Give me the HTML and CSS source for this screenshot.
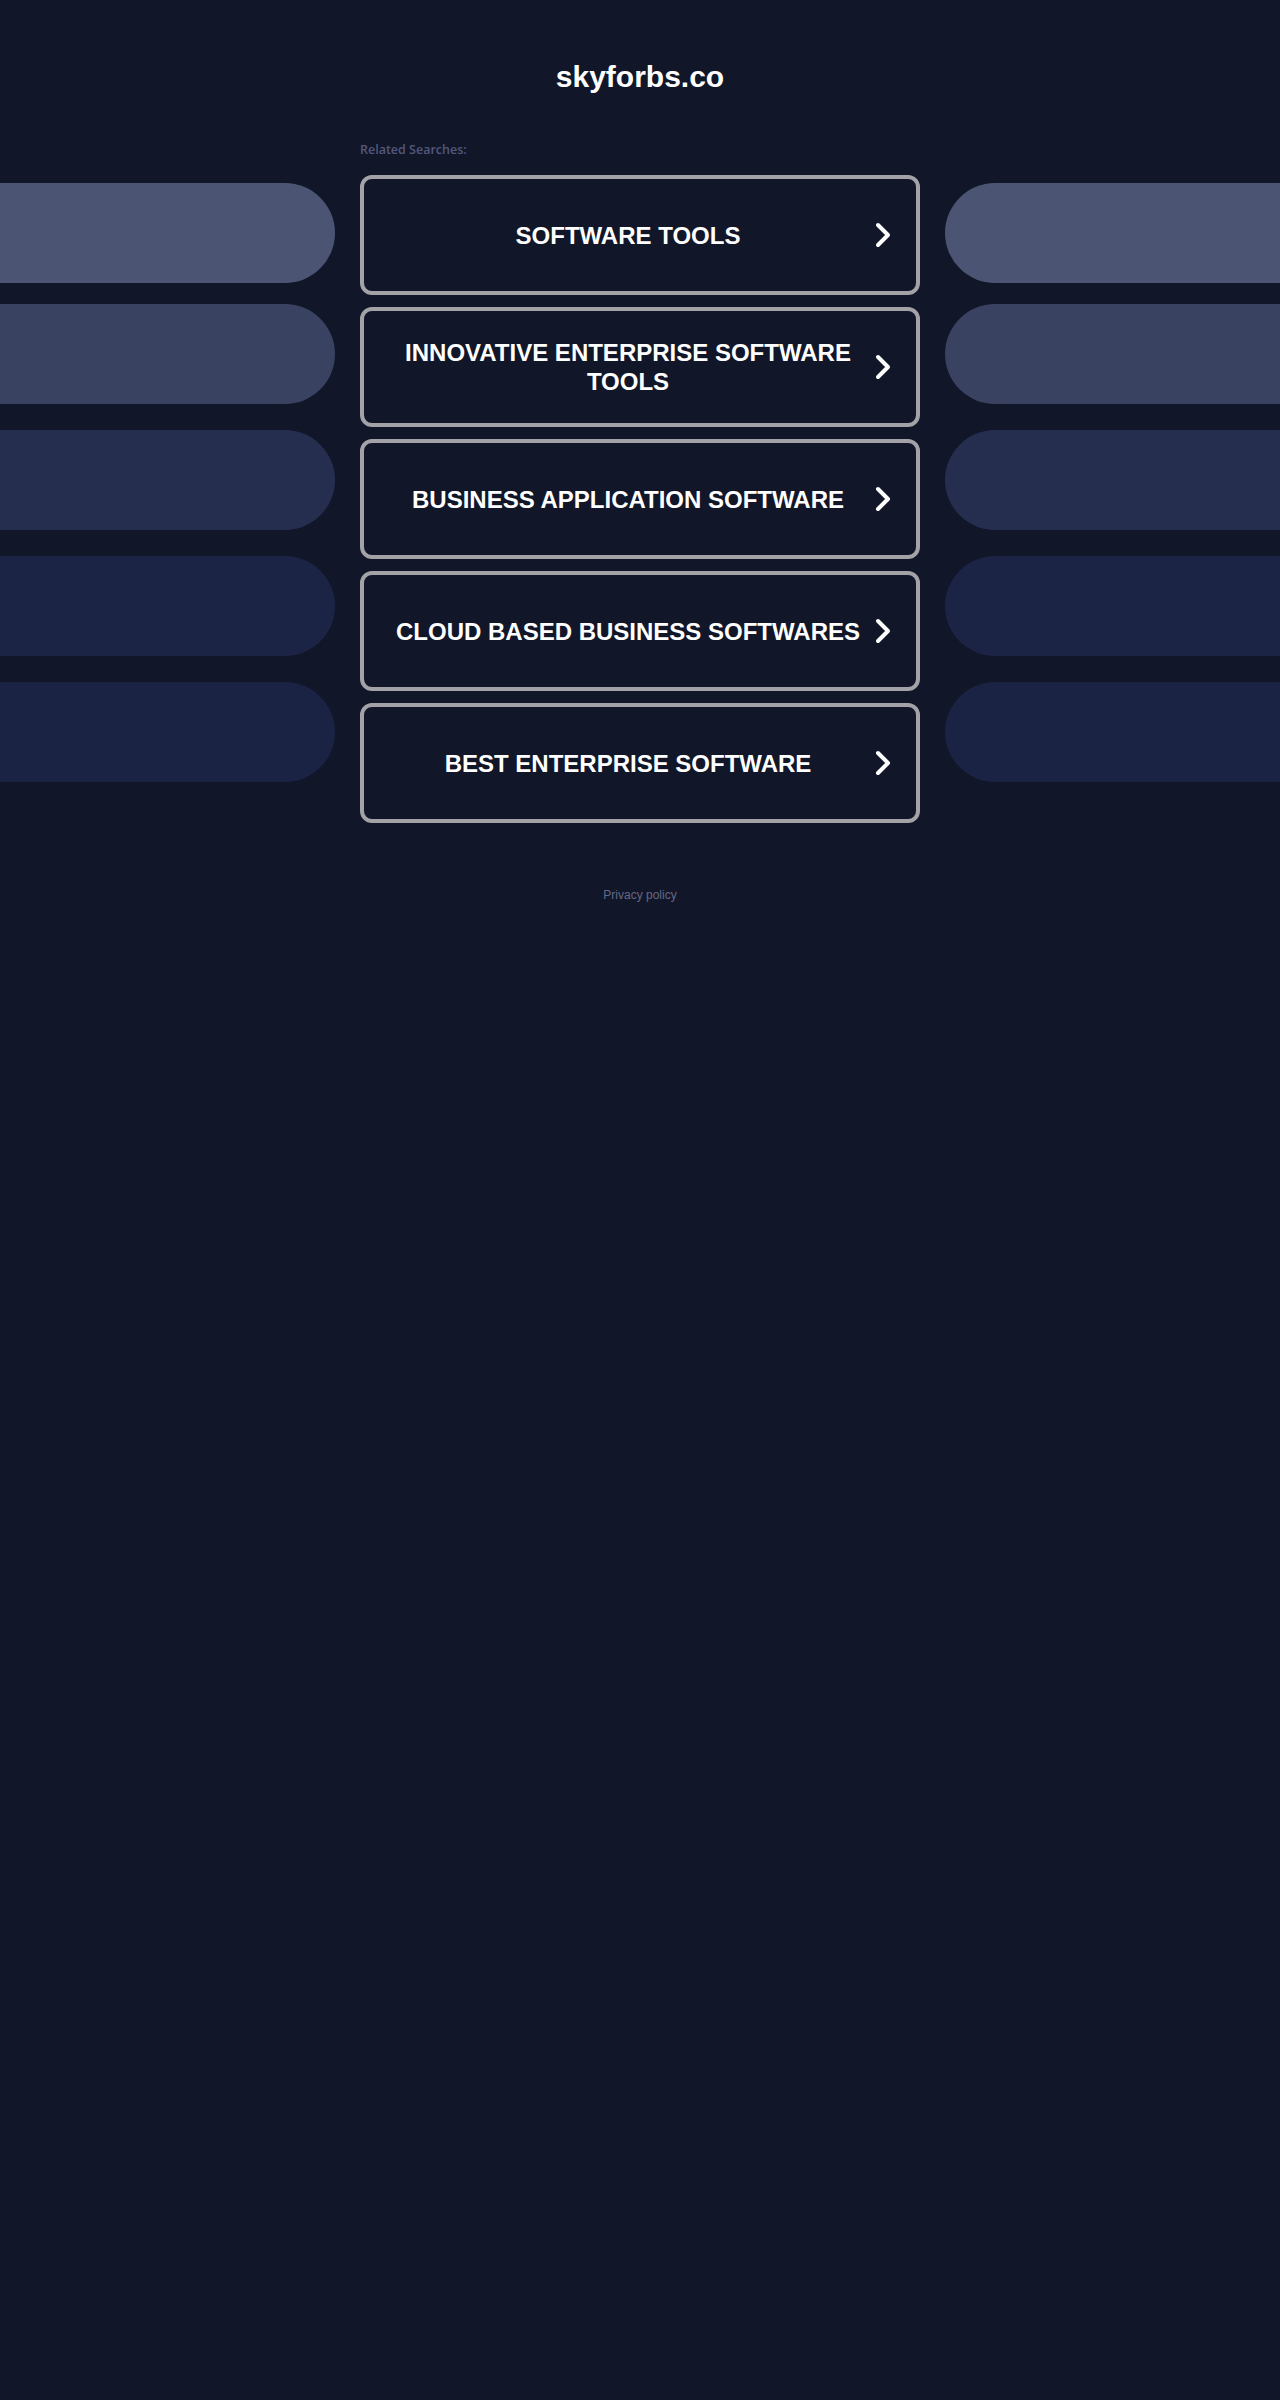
FILE: index.html
```html
<!DOCTYPE html>
<html lang="en">
<head>
    <meta charset="UTF-8">
    <meta name="viewport" content="width=device-width, initial-scale=1.0">
    <title>skyforbs.co</title>
    <link rel="stylesheet" href="styles.css">
</head>
<body>
    <div class="header">
        <h1 class="domain">skyforbs.co</h1>
    </div>

    <div class="layout">
        <div class="side side-left">
            <div class="pill pill-1"></div>
            <div class="pill pill-2"></div>
            <div class="pill pill-3"></div>
            <div class="pill pill-4"></div>
            <div class="pill pill-5"></div>
        </div>

        <div class="main">
            <p class="label">Related Searches:</p>
            <ul class="links">
                <li><a href="#" class="link"><span class="link-text">SOFTWARE TOOLS</span><svg class="chevron" viewBox="0 0 16 26"><polyline points="3,3 13,13 3,23" /></svg></a></li>
                <li><a href="#" class="link"><span class="link-text">INNOVATIVE ENTERPRISE SOFTWARE TOOLS</span><svg class="chevron" viewBox="0 0 16 26"><polyline points="3,3 13,13 3,23" /></svg></a></li>
                <li><a href="#" class="link"><span class="link-text">BUSINESS APPLICATION SOFTWARE</span><svg class="chevron" viewBox="0 0 16 26"><polyline points="3,3 13,13 3,23" /></svg></a></li>
                <li><a href="#" class="link"><span class="link-text">CLOUD BASED BUSINESS SOFTWARES</span><svg class="chevron" viewBox="0 0 16 26"><polyline points="3,3 13,13 3,23" /></svg></a></li>
                <li><a href="#" class="link"><span class="link-text">BEST ENTERPRISE SOFTWARE</span><svg class="chevron" viewBox="0 0 16 26"><polyline points="3,3 13,13 3,23" /></svg></a></li>
            </ul>
        </div>

        <div class="side side-right">
            <div class="pill pill-1"></div>
            <div class="pill pill-2"></div>
            <div class="pill pill-3"></div>
            <div class="pill pill-4"></div>
            <div class="pill pill-5"></div>
        </div>
    </div>

    <div class="footer">
        <a href="#" class="privacy">Privacy policy</a>
    </div>
</body>
</html>
```

FILE: styles.css
```css
body {
    margin: 0;
    padding: 0;
    background-color: #111629;
    font-family: "Liberation Sans", Arial, sans-serif;
    color: #fff;
    min-height: 2400px;
}

.header {
    padding-top: 59px;
    text-align: center;
}

.domain {
    margin: 0;
    font-size: 30px;
    line-height: 36px;
    font-weight: bold;
    color: #fff;
}

.layout {
    display: grid;
    grid-template-columns: 335px 560px 335px;
    column-gap: 25px;
    margin-top: 29px;
    align-items: start;
}

.side {
    display: flex;
    flex-direction: column;
    gap: 26px;
    padding-top: 59px;
}

.pill {
    height: 100px;
}

.pill-2 {
    margin-top: -5px;
}

.side-left .pill {
    border-radius: 0 50px 50px 0;
}

.side-right .pill {
    border-radius: 50px 0 0 50px;
}

.pill-1 { background-color: #4b5573; }
.pill-2 { background-color: #394260; }
.pill-3 { background-color: #262e4f; }
.pill-4 { background-color: #1c2446; }
.pill-5 { background-color: #1b2344; }

.main {
    padding-top: 18px;
}

.label {
    margin: 0 0 17px;
    font-family: "Open Sans", sans-serif;
    font-size: 12.5px;
    line-height: 16px;
    font-weight: 600;
    color: #53587c;
}

.links {
    list-style: none;
    margin: 0;
    padding: 0;
    display: flex;
    flex-direction: column;
    gap: 12px;
}

.link {
    display: flex;
    align-items: center;
    box-sizing: border-box;
    height: 120px;
    padding: 0 25px 0 27px;
    border: 4px solid #a2a2a7;
    border-radius: 12px;
    background-color: #111629;
    color: #fff;
    text-decoration: none;
}

.link-text {
    flex: 1;
    text-align: center;
    font-size: 24px;
    line-height: 29px;
    font-weight: bold;
}

.chevron {
    width: 16px;
    height: 26px;
    margin-left: 10px;
    flex-shrink: 0;
}

.chevron polyline {
    fill: none;
    stroke: #fff;
    stroke-width: 4;
    stroke-linecap: round;
    stroke-linejoin: round;
}

.footer {
    margin-top: 62px;
    text-align: center;
}

.privacy {
    font-size: 12px;
    line-height: 16px;
    color: #656985;
    text-decoration: none;
}
```
